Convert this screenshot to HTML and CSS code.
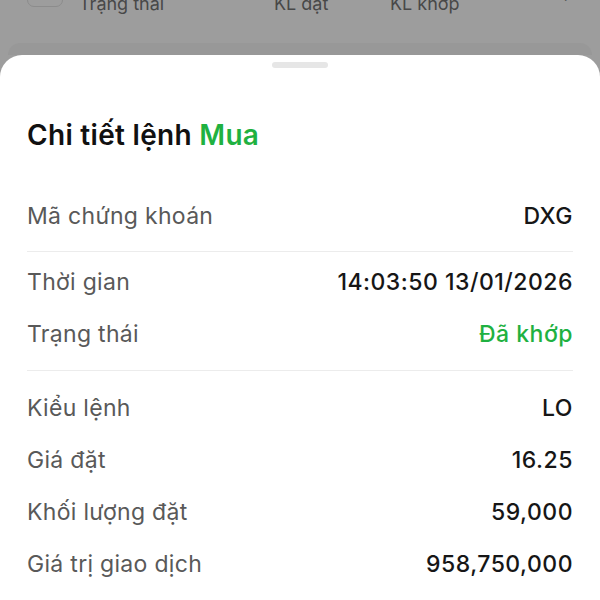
FILE: index.html
```html
<!DOCTYPE html>
<html lang="vi">
<head>
<meta charset="utf-8">
<link rel="stylesheet" href="styles.css">
</head>
<body>
<div class="backdrop">
  <div class="table-head">
    <span class="checkbox"></span>
    <span class="col">Trạng thái</span>
    <span class="col">KL đặt</span>
    <span class="col">KL khớp</span>
    <span class="col col-mark">'</span>
  </div>
  <div class="under-card"></div>
</div>
<div class="sheet">
  <div class="handle"></div>
  <h1 class="title">Chi tiết lệnh <span class="buy">Mua</span></h1>
  <div class="section section-first">
    <div class="row"><span class="label">Mã chứng khoán</span><span class="value">DXG</span></div>
  </div>
  <div class="section section-mid">
    <div class="row"><span class="label">Thời gian</span><span class="value">14:03:50 13/01/2026</span></div>
    <div class="row"><span class="label">Trạng thái</span><span class="value value-green">Đã khớp</span></div>
  </div>
  <div class="section section-last">
    <div class="row"><span class="label">Kiểu lệnh</span><span class="value">LO</span></div>
    <div class="row"><span class="label">Giá đặt</span><span class="value">16.25</span></div>
    <div class="row"><span class="label">Khối lượng đặt</span><span class="value">59,000</span></div>
    <div class="row"><span class="label">Giá trị giao dịch</span><span class="value">958,750,000</span></div>
  </div>
</div>
</body>
</html>
```
FILE: styles.css
```css
* { box-sizing: border-box; }
html, body {
  margin: 0;
  padding: 0;
  height: 600px;
  overflow: hidden;
}
body {
  background: #9d9d9d;
  font-family: Inter, "Noto Sans", sans-serif;
}
.backdrop {
  height: 55px;
  display: flex;
  flex-direction: column;
}
.table-head {
  display: grid;
  grid-template-columns: 52px 195px 116px 173px auto;
  align-items: start;
  height: 43px;
  padding-left: 27px;
  color: #484848;
  font-size: 18px;
}
.checkbox {
  width: 36px;
  height: 36px;
  border: 1.5px solid #8c8c8c;
  border-radius: 7px;
  margin-top: -29px;
}
.col {
  line-height: 22px;
  margin-top: -7px;
  white-space: nowrap;
}
.col-mark { color: #5a5a5a; }
.under-card {
  flex: 1;
  margin: 0 8px;
  background: #989898;
  border-radius: 14px 14px 0 0;
}
.sheet {
  background: #fff;
  border-radius: 22px 22px 0 0;
  height: 545px;
  padding: 7px 27px 0 27px;
}
.handle {
  width: 56px;
  height: 6px;
  border-radius: 3px;
  background: #e6e6e6;
  margin: 0 auto;
}
.title {
  margin: 50px 0 38px 0;
  font-size: 28px;
  letter-spacing: 0.3px;
  line-height: 34px;
  font-weight: 600;
  color: #111;
}
.buy { color: #1fb141; }
.section { border-top: 1px solid #ececec; }
.section-first { border-top: none; padding-bottom: 9px; }
.section-mid { padding-top: 4px; padding-bottom: 10px; }
.section-last { padding-top: 11px; }
.row {
  height: 52px;
  display: flex;
  align-items: center;
  justify-content: space-between;
}
.label {
  font-size: 23px;
  letter-spacing: 0.3px;
  color: #595959;
}
.value {
  font-size: 23px;
  letter-spacing: 0.5px;
  font-weight: 500;
  color: #161616;
}
.value-green { color: #1fb141; }
```
